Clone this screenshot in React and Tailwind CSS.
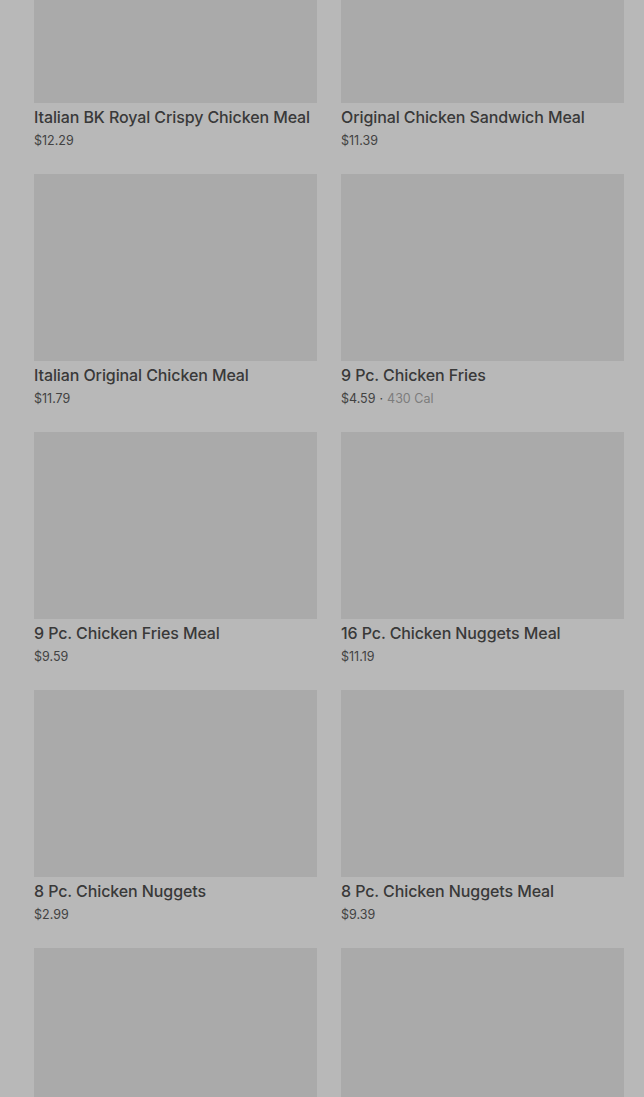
const items = [
  { name: 'Italian BK Royal Crispy Chicken Meal', price: '$12.29' },
  { name: 'Original Chicken Sandwich Meal', price: '$11.39' },
  { name: 'Italian Original Chicken Meal', price: '$11.79' },
  { name: '9 Pc. Chicken Fries', price: '$4.59', cal: '430 Cal' },
  { name: '9 Pc. Chicken Fries Meal', price: '$9.59' },
  { name: '16 Pc. Chicken Nuggets Meal', price: '$11.19' },
  { name: '8 Pc. Chicken Nuggets', price: '$2.99' },
  { name: '8 Pc. Chicken Nuggets Meal', price: '$9.39' },
  { name: '', price: '' },
  { name: '', price: '' },
]

function Card({ item }) {
  return (
    <div className="flex flex-col">
      <div className="h-[187px] bg-[#aaaaaa]" />
      <p className="mt-0.5 text-[16px] font-medium leading-6 tracking-[-0.1px] text-[#393939]">
        {item.name}
      </p>
      <p className="mt-0.5 text-[12.5px] leading-5 text-[#424242]">
        {item.price}
        {item.cal && (
          <>
            <span className="mx-1">·</span>
            <span className="text-[#7c7c7c]">{item.cal}</span>
          </>
        )}
      </p>
    </div>
  )
}

export default function App() {
  return (
    <div className="h-[1097px] overflow-hidden bg-[#b8b8b8] font-['Inter',sans-serif]">
      <div className="-mt-[84px] grid grid-cols-2 gap-x-6 gap-y-[23px] pl-[34px] pr-5">
        {items.map((item, i) => (
          <Card key={i} item={item} />
        ))}
      </div>
    </div>
  )
}
